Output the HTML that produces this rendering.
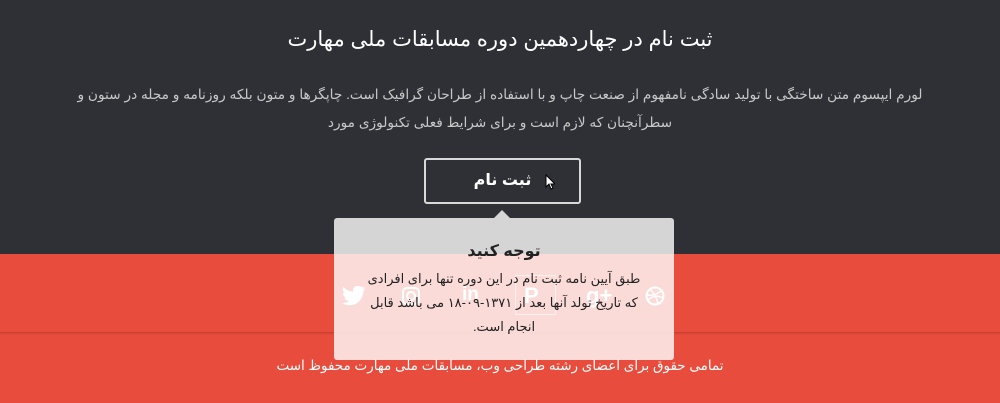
<!DOCTYPE html>
<html><head><meta charset="utf-8"><style>
html,body{margin:0;padding:0;width:1000px;height:403px;overflow:hidden;font-family:"Liberation Sans","DejaVu Sans","Noto Sans CJK SC",sans-serif;direction:rtl}
.top{position:absolute;left:0;top:0;width:1000px;height:254px;background:#2e3035}
.red{position:absolute;left:0;top:254px;width:1000px;height:149px;background:#e74c3c}
.sh{position:absolute;left:0;top:332px;width:1000px;height:3px;background:linear-gradient(#c9402f,#e74c3c)}
h1{position:absolute;top:27px;left:0;width:1000px;margin:0;text-align:center;color:#fff;font-size:21px;font-weight:normal}
p.d{position:absolute;top:81px;left:0;width:1000px;margin:0;text-align:center;color:#c8c8c8;font-size:13.7px;line-height:28px;white-space:nowrap}
.btn{position:absolute;left:424px;top:158px;width:153px;height:42px;border:2px solid #d8d8d8;border-radius:3px;color:#fff;font-size:16px;font-weight:bold;text-align:center;line-height:42px;box-sizing:content-box}
.icons{position:absolute;top:283px;left:0;width:1000px}
.icons span{position:absolute;color:#fff;font-size:22px}
.foot{position:absolute;top:358px;left:0;width:1000px;text-align:center;color:#fff;font-size:13.5px}
.pop{position:absolute;left:334px;top:218px;width:340px;height:142px;background:rgba(255,255,255,.8);border-radius:3px;text-align:center;color:#222}
.pop:before{content:"";position:absolute;left:160px;top:-8px;border:8px solid transparent;border-top:0;border-bottom-color:rgba(255,255,255,.8)}
.pop h3{margin:23px 0 6px;font-size:16px}
.pop div{font-size:13px;line-height:24px;padding:0 26px}
</style></head><body>
<div class="top"></div>
<div class="red"></div>
<div class="sh"></div>
<h1>ثبت نام در چهاردهمین دوره مسابقات ملی مهارت</h1>
<p class="d">لورم ایپسوم متن ساختگی با تولید سادگی نامفهوم از صنعت چاپ و با استفاده از طراحان گرافیک است. چاپگرها و متون بلکه روزنامه و مجله در ستون و<br>سطرآنچنان که لازم است و برای شرایط فعلی تکنولوژی مورد</p>
<div class="btn">ثبت نام</div>
<svg style="position:absolute;left:545px;top:174px" width="10" height="16" viewBox="0 0 10 16"><path d="M1 1v12l3-3 2 5 2-1-2-4h4z" fill="#fff" stroke="#000" stroke-width="1"/></svg>
<div class="icons">
<svg style="position:absolute;left:342px;top:3px" width="24" height="20" viewBox="0 0 24 20"><path d="M23 2c-1 .5-2 .7-3 .8 1-.6 2-1.5 2.3-2.6-1 .6-2 1-3 1.2A4.8 4.8 0 0 0 11 5.7C7 5.5 3.6 3.6 1.4.9c-1.3 2.3-.4 5 1.5 6.4-.8 0-1.5-.2-2.2-.6 0 2.3 1.7 4.3 3.900 4.800-.7.200-1.500.200-2.200.100.600 2 2.400 3.300 4.500 3.400A9.800 9.800 0 0 1 0 17c2.200 1.400 4.700 2.200 7.500 2.200 9 0 14-7.500 13.900-14.200C22 4.400 22.700 3.300 23 2z" fill="#fff"/></svg>
<svg style="position:absolute;left:402px;top:4px" width="18" height="18" viewBox="0 0 18 18"><rect x="1" y="1" width="16" height="16" rx="4" fill="none" stroke="#fff" stroke-width="2"/><circle cx="9" cy="9" r="4" fill="none" stroke="#fff" stroke-width="2"/></svg>
<span style="left:462px;top:1px;font-weight:bold;font-size:19px;direction:ltr">in</span>
<div style="position:absolute;left:515px;top:-8px;width:39px;height:38px;border:1px solid rgba(255,255,255,.6)"></div>
<span style="left:524px;top:0;font-weight:bold">P</span>
<span style="left:586px;top:0;font-weight:bold;direction:ltr">g+</span>
<svg style="position:absolute;left:645px;top:3px" width="20" height="20" viewBox="0 0 20 20"><circle cx="10" cy="10" r="8.5" fill="none" stroke="#fff" stroke-width="2"/><path d="M5 3c4 4 7 9 8 15M2 9c6 1 11-1 15-5M3 14c4-4 10-5 15-2" fill="none" stroke="#fff" stroke-width="1.5"/></svg>
</div>
<div class="foot">تمامی حقوق برای اعضای رشته طراحی وب، مسابقات ملی مهارت محفوظ است</div>
<div class="pop"><h3>توجه کنید</h3><div>طبق آیین نامه ثبت نام در این دوره تنها برای افرادی که تاریخ تولد آنها بعد از ۱۳۷۱-۰۹-۱۸ می باشد قابل انجام است.</div></div>
</body></html>
